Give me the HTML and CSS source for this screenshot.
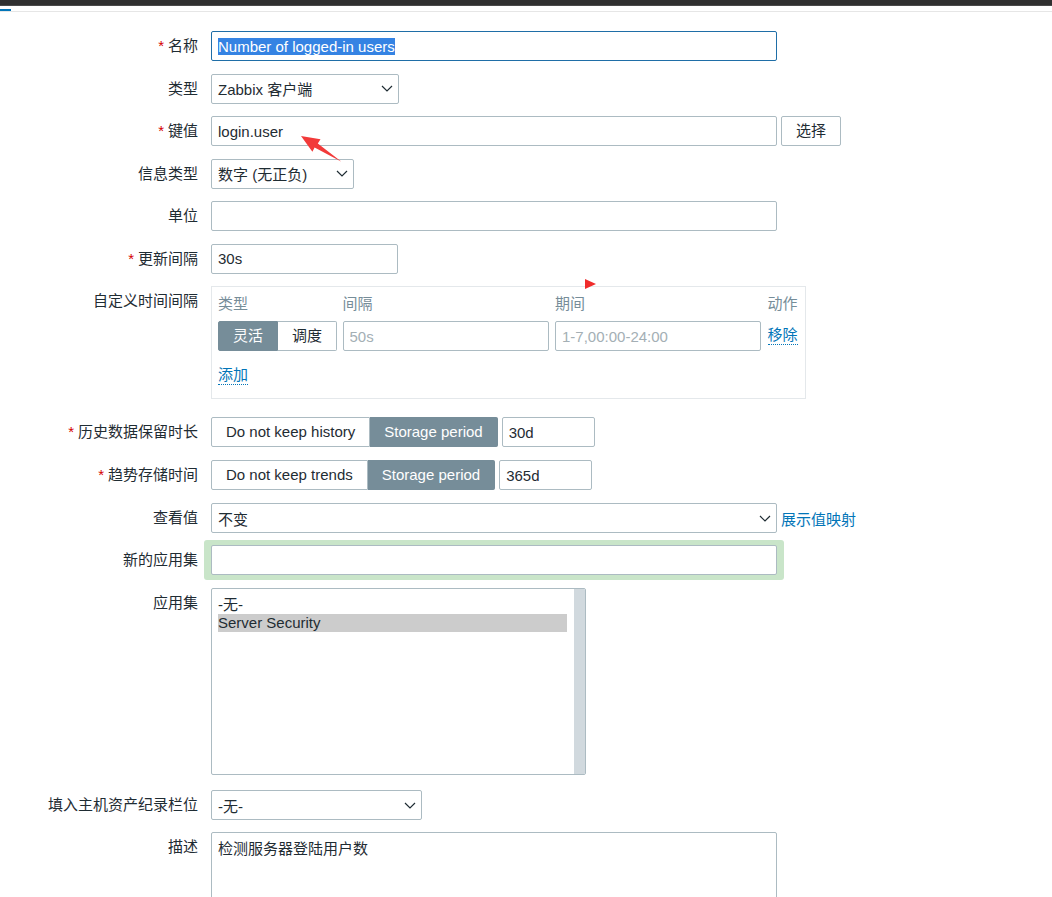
FILE: index.html
```html
<!DOCTYPE html>
<html lang="zh-CN">
<head>
<meta charset="utf-8">
<title>Item</title>
<link rel="stylesheet" href="styles.css">
</head>
<body>
<div class="topbar"></div>
<div class="tabline"><span class="tab-active"></span></div>

<form class="form">
  <div class="row r-first">
    <label class="lbl"><span class="req">*</span>名称</label>
    <div class="input focused w-566"><span class="selection">Number of logged-in users</span></div>
  </div>

  <div class="row">
    <label class="lbl">类型</label>
    <div class="input select w-188"><span>Zabbix 客户端</span><svg class="chev" width="12" height="7" viewBox="0 0 12 7"><polyline points="1,1 6,6 11,1" fill="none" stroke="#1f2c33" stroke-width="1.2"/></svg></div>
  </div>

  <div class="row">
    <label class="lbl"><span class="req">*</span>键值</label>
    <div class="group">
      <input class="input w-566" type="text" value="login.user">
      <button type="button" class="btn">选择</button>
    </div>
  </div>

  <div class="row">
    <label class="lbl">信息类型</label>
    <div class="input select w-143"><span>数字 (无正负)</span><svg class="chev" width="12" height="7" viewBox="0 0 12 7"><polyline points="1,1 6,6 11,1" fill="none" stroke="#1f2c33" stroke-width="1.2"/></svg></div>
  </div>

  <div class="row">
    <label class="lbl">单位</label>
    <input class="input w-566" type="text" value="">
  </div>

  <div class="row">
    <label class="lbl"><span class="req">*</span>更新间隔</label>
    <input class="input w-187" type="text" value="30s">
  </div>

  <div class="row">
    <label class="lbl">自定义时间间隔</label>
    <div class="intervals">
      <div class="iv-grid">
        <div class="th">类型</div>
        <div class="th">间隔</div>
        <div class="th">期间</div>
        <div class="th">动作</div>
        <div class="seg">
          <span class="on">灵活</span><span>调度</span>
        </div>
        <input class="input" type="text" placeholder="50s">
        <input class="input" type="text" placeholder="1-7,00:00-24:00">
        <div class="act"><a class="link link-action">移除</a></div>
      </div>
      <a class="link link-action add">添加</a>
    </div>
  </div>

  <div class="row r-history">
    <label class="lbl"><span class="req">*</span>历史数据保留时长</label>
    <div class="group">
      <div class="seg">
        <span>Do not keep history</span><span class="on">Storage period</span>
      </div>
      <input class="input w-93" type="text" value="30d">
    </div>
  </div>

  <div class="row r-13">
    <label class="lbl"><span class="req">*</span>趋势存储时间</label>
    <div class="group">
      <div class="seg">
        <span>Do not keep trends</span><span class="on">Storage period</span>
      </div>
      <input class="input w-93" type="text" value="365d">
    </div>
  </div>

  <div class="row r-13">
    <label class="lbl">查看值</label>
    <div class="group">
      <div class="input select w-566"><span>不变</span><svg class="chev" width="12" height="7" viewBox="0 0 12 7"><polyline points="1,1 6,6 11,1" fill="none" stroke="#1f2c33" stroke-width="1.2"/></svg></div>
      <a class="link">展示值映射</a>
    </div>
  </div>

  <div class="row r-newapp">
    <label class="lbl lbl-green">新的应用集</label>
    <div class="green">
      <input class="input w-566" type="text" value="">
    </div>
  </div>

  <div class="row r-apps">
    <label class="lbl">应用集</label>
    <div class="listbox">
      <div class="lb-items">
        <div class="opt">-无-</div>
        <div class="opt chosen">Server Security</div>
      </div>
      <div class="lb-track"></div>
    </div>
  </div>

  <div class="row r-inv">
    <label class="lbl">填入主机资产纪录栏位</label>
    <div class="input select w-211"><span>-无-</span><svg class="chev" width="12" height="7" viewBox="0 0 12 7"><polyline points="1,1 6,6 11,1" fill="none" stroke="#1f2c33" stroke-width="1.2"/></svg></div>
  </div>

  <div class="row r-desc">
    <label class="lbl">描述</label>
    <div class="textarea w-566">检测服务器登陆用户数</div>
  </div>
</form>

<svg class="anno-arrow" width="60" height="40" viewBox="290 130 60 40">
  <polygon points="301,136 320.5,139.2 317.8,143.6 341.5,161.8 314.6,147.6 312.4,151.8" fill="#f23a3a"/>
</svg>
<svg class="anno-tri" width="11" height="10" viewBox="0 0 11 10">
  <polygon points="0,0 11,5 0,10" fill="#f02c2c"/>
</svg>
</body>
</html>
```

FILE: styles.css
```css
html, body {
  margin: 0;
  padding: 0;
  overflow: hidden;
  background: #ffffff;
}

body {
  position: relative;
  width: 1052px;
  height: 897px;
  font-family: "Liberation Sans", "Noto Sans CJK SC", sans-serif;
  font-size: 15px;
  color: #1f2c33;
}

.topbar {
  height: 5px;
  background: #303030;
  border-bottom: 1px solid #4a4a4a;
}

.tabline {
  margin-top: 3px;
  height: 2px;
  border-bottom: 1px solid #e6e6e6;
}

.tab-active {
  display: block;
  width: 11px;
  height: 2px;
  background: #0275b8;
}

.form {
  display: flex;
  flex-direction: column;
}

.row {
  display: flex;
  align-items: flex-start;
  gap: 13px;
  margin-top: 12.5px;
}

.r-first { margin-top: 19px; }
.r-history { margin-top: 18px; }
.r-13 { margin-top: 13px; }
.r-newapp { margin-top: 7px; }
.r-apps { margin-top: 8px; }
.r-inv { margin-top: 15px; }
.r-desc { margin-top: 12px; }

.lbl {
  flex: none;
  width: 198px;
  text-align: right;
  line-height: 30px;
  white-space: nowrap;
}

.lbl-green { padding-top: 5px; }

.req {
  color: #d40000;
  margin-right: 4px;
}

.input {
  box-sizing: border-box;
  height: 30px;
  border: 1px solid #acbbc2;
  border-radius: 2px;
  padding: 0 6px;
  margin: 0;
  background: #fff;
  font-family: inherit;
  font-size: 15px;
  color: #1f2c33;
  outline: none;
  display: flex;
  align-items: center;
}

.input::placeholder {
  color: #a4afb5;
  opacity: 1;
}

.focused {
  border-color: #1f6ea7;
}

.selection {
  background: #3583e3;
  color: #ffffff;
  line-height: 17px;
}

.select {
  justify-content: space-between;
  padding-right: 5px;
  white-space: nowrap;
}

.chev { flex: none; }

.w-566 { width: 566px; }
.w-188 { width: 188px; }
.w-187 { width: 187px; }
.w-143 { width: 143px; }
.w-211 { width: 211px; }
.w-93 { width: 93px; }

.group {
  display: flex;
  align-items: center;
  gap: 4px;
}

.btn {
  box-sizing: border-box;
  height: 30px;
  padding: 0 14px;
  border: 1px solid #acbbc2;
  border-radius: 2px;
  background: #fff;
  font-family: inherit;
  font-size: 15px;
  color: #1f2c33;
  line-height: 28px;
}

.link {
  color: #0275b8;
  text-decoration: none;
  white-space: nowrap;
}

.link-action {
  display: inline-block;
  line-height: 18px;
  border-bottom: 1px dotted #0275b8;
}

/* custom intervals */
.intervals {
  box-sizing: border-box;
  width: 595px;
  height: 113px;
  border: 1px solid #e4e8eb;
  padding: 5px 6px 0 6px;
}

.iv-grid {
  display: grid;
  grid-template-columns: 118px 206px 206px auto;
  grid-template-rows: 24px 30px;
  column-gap: 6.5px;
  row-gap: 5px;
}

.th {
  color: #768d99;
  line-height: 24px;
  white-space: nowrap;
}

.iv-grid .input { width: 100%; }

.act {
  display: flex;
  align-items: center;
  padding-bottom: 2px;
}

.add {
  margin-top: 15px;
}

/* segmented radio */
.seg {
  display: flex;
}

.seg > span {
  box-sizing: border-box;
  height: 30px;
  line-height: 28px;
  padding: 0 14px;
  border: 1px solid #acbbc2;
  background: #fff;
  white-space: nowrap;
}

.seg > span + span { border-left: none; }
.seg > span:first-child { border-radius: 2px 0 0 2px; }
.seg > span:last-child { border-radius: 0 2px 2px 0; }

.seg > span.on {
  background: #768d99;
  border-color: #768d99;
  color: #ffffff;
}

/* new application highlight */
.green {
  margin-left: -7px;
  padding: 5px 7px;
  background: #c9e5c9;
  border-radius: 3px;
}

/* listbox */
.listbox {
  box-sizing: border-box;
  width: 375px;
  height: 187px;
  border: 1px solid #acbbc2;
  border-radius: 2px;
  display: flex;
  overflow: hidden;
}

.lb-items {
  flex: 1;
  padding: 7px 7px 0 6px;
}

.opt {
  line-height: 18px;
  height: 18px;
  color: #1f2c33;
  white-space: nowrap;
}

.opt.chosen {
  background: #cccccc;
}

.lb-track {
  flex: none;
  width: 11px;
  background: #d1d9de;
}

.textarea {
  box-sizing: border-box;
  height: 100px;
  border: 1px solid #acbbc2;
  border-radius: 2px;
  padding: 7px 6px;
  line-height: 18px;
}

/* screenshot annotations laid over the form */
.anno-arrow {
  position: absolute;
  left: 290px;
  top: 130px;
}

.anno-tri {
  position: absolute;
  left: 585px;
  top: 279px;
}
```
